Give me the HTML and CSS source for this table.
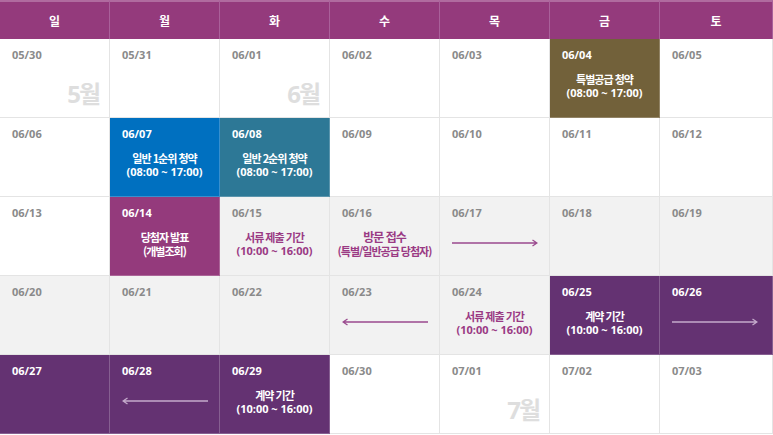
FILE: index.html
```html
<!DOCTYPE html>
<html lang="ko">
<head>
<meta charset="utf-8">
<title>청약 일정</title>
<link rel="stylesheet" href="styles.css">
</head>
<body>
<div class="cal">
  <div class="hd">일</div><div class="hd">월</div><div class="hd">화</div><div class="hd">수</div><div class="hd">목</div><div class="hd">금</div><div class="hd">토</div>

  <div class="cell"><span class="date">05/30</span><span class="mon">5월</span></div>
  <div class="cell"><span class="date">05/31</span></div>
  <div class="cell"><span class="date">06/01</span><span class="mon">6월</span></div>
  <div class="cell"><span class="date">06/02</span></div>
  <div class="cell"><span class="date">06/03</span></div>
  <div class="cell olive"><span class="date">06/04</span><p class="ev"><span class="ti">특별공급 청약</span><span class="tm">(08:00 ~ 17:00)</span></p></div>
  <div class="cell"><span class="date">06/05</span></div>

  <div class="cell"><span class="date">06/06</span></div>
  <div class="cell blue"><span class="date">06/07</span><p class="ev"><span class="ti">일반 1순위 청약</span><span class="tm">(08:00 ~ 17:00)</span></p></div>
  <div class="cell teal"><span class="date">06/08</span><p class="ev"><span class="ti">일반 2순위 청약</span><span class="tm">(08:00 ~ 17:00)</span></p></div>
  <div class="cell"><span class="date">06/09</span></div>
  <div class="cell"><span class="date">06/10</span></div>
  <div class="cell"><span class="date">06/11</span></div>
  <div class="cell"><span class="date">06/12</span></div>

  <div class="cell"><span class="date">06/13</span></div>
  <div class="cell magenta"><span class="date">06/14</span><p class="ev"><span class="ti">당첨자 발표</span><span class="ti">(개별조회)</span></p></div>
  <div class="cell grey"><span class="date">06/15</span><p class="ev"><span class="ti">서류 제출 기간</span><span class="tm">(10:00 ~ 16:00)</span></p></div>
  <div class="cell grey"><span class="date">06/16</span><p class="ev"><span class="ti big">방문 접수</span><span class="ti">(특별/일반공급 당첨자)</span></p></div>
  <div class="cell grey"><span class="date">06/17</span><svg class="arrow" viewBox="0 0 86 8" width="86" height="8"><path d="M0 4H85M80.5 1L85 4L80.5 7" fill="none" stroke="currentColor" stroke-width="1.3"/></svg></div>
  <div class="cell grey"><span class="date">06/18</span></div>
  <div class="cell grey"><span class="date">06/19</span></div>

  <div class="cell grey"><span class="date">06/20</span></div>
  <div class="cell grey"><span class="date">06/21</span></div>
  <div class="cell grey"><span class="date">06/22</span></div>
  <div class="cell grey"><span class="date">06/23</span><svg class="arrow" viewBox="0 0 86 8" width="86" height="8"><path d="M1 4H86M5.5 1L1 4L5.5 7" fill="none" stroke="currentColor" stroke-width="1.3"/></svg></div>
  <div class="cell grey"><span class="date">06/24</span><p class="ev"><span class="ti">서류 제출 기간</span><span class="tm">(10:00 ~ 16:00)</span></p></div>
  <div class="cell purple"><span class="date">06/25</span><p class="ev"><span class="ti">계약 기간</span><span class="tm">(10:00 ~ 16:00)</span></p></div>
  <div class="cell purple"><span class="date">06/26</span><svg class="arrow" viewBox="0 0 86 8" width="86" height="8"><path d="M0 4H85M80.5 1L85 4L80.5 7" fill="none" stroke="currentColor" stroke-width="1.3"/></svg></div>

  <div class="cell purple"><span class="date">06/27</span></div>
  <div class="cell purple"><span class="date">06/28</span><svg class="arrow" viewBox="0 0 86 8" width="86" height="8"><path d="M1 4H86M5.5 1L1 4L5.5 7" fill="none" stroke="currentColor" stroke-width="1.3"/></svg></div>
  <div class="cell purple"><span class="date">06/29</span><p class="ev"><span class="ti">계약 기간</span><span class="tm">(10:00 ~ 16:00)</span></p></div>
  <div class="cell"><span class="date">06/30</span></div>
  <div class="cell"><span class="date">07/01</span><span class="mon">7월</span></div>
  <div class="cell"><span class="date">07/02</span></div>
  <div class="cell"><span class="date">07/03</span></div>
</div>
</body>
</html>
```

FILE: styles.css
```css
* { box-sizing: border-box; }
html, body { margin: 0; padding: 0; background: #fff; }
body {
  font-family: "Open Sans", "Noto Sans CJK KR", sans-serif;
  width: 773px;
  height: 435px;
  overflow: hidden;
}
.cal {
  display: grid;
  grid-template-columns: repeat(6, 110px) 1fr;
  grid-template-rows: 39px repeat(5, 79px);
  width: 773px;
}
.hd {
  background: #943a7c;
  border-top: 2px solid #b06b9f;
  border-right: 1px solid #a9609a;
  color: #fff;
  font-family: "Noto Sans CJK KR", sans-serif;
  font-weight: 700;
  font-size: 12px;
  display: flex;
  align-items: center;
  justify-content: center;
}
.cell {
  border-right: 1px solid #e4e4e4;
  border-bottom: 1px solid #e4e4e4;
  background: #fff;
  display: flex;
  flex-direction: column;
  padding: 9px 12px 0 12px;
  color: #8a8a8a;
}
.date {
  font-size: 11px;
  font-weight: 700;
  line-height: 14px;
  color: #8a8a8a;
}
.mon {
  margin-top: auto;
  align-self: flex-end;
  margin-right: -2px;
  margin-bottom: 9px;
  font-family: "Open Sans", "Noto Sans CJK KR", sans-serif;
  font-size: 24px;
  font-weight: 700;
  line-height: 28px;
  letter-spacing: -2px;
  color: #dedede;
}
.ev {
  margin: 10px -12px 0 -12px;
  text-align: center;
  display: flex;
  flex-direction: column;
  align-items: center;
  font-weight: 700;
  font-size: 11px;
  line-height: 14px;
}
.ti {
  font-family: "Noto Sans CJK KR", sans-serif;
  letter-spacing: -1px;
  line-height: 14px;
}
.ti.big { font-size: 12px; }
.tm {
  font-family: "Open Sans", "Noto Sans CJK KR", sans-serif;
  letter-spacing: 0;
  line-height: 14px;
}
.arrow {
  display: block;
  margin-top: 19px;
  color: #9a4a8e;
}
.grey { background: #f2f2f2; }
.grey .ev { color: #9a3a84; }
.olive, .blue, .teal, .magenta, .purple {
  border-right-color: rgba(255,255,255,0.22);
  border-bottom-color: rgba(255,255,255,0.22);
  color: #fff;
}
.olive .date, .blue .date, .teal .date, .magenta .date, .purple .date { color: #fff; }
.olive { background: #72613a; }
.blue { background: #0070c0; }
.teal { background: #2d7896; }
.magenta { background: #943a7c; }
.purple { background: #643272; }
.purple .arrow { color: #c4aacb; }
```
